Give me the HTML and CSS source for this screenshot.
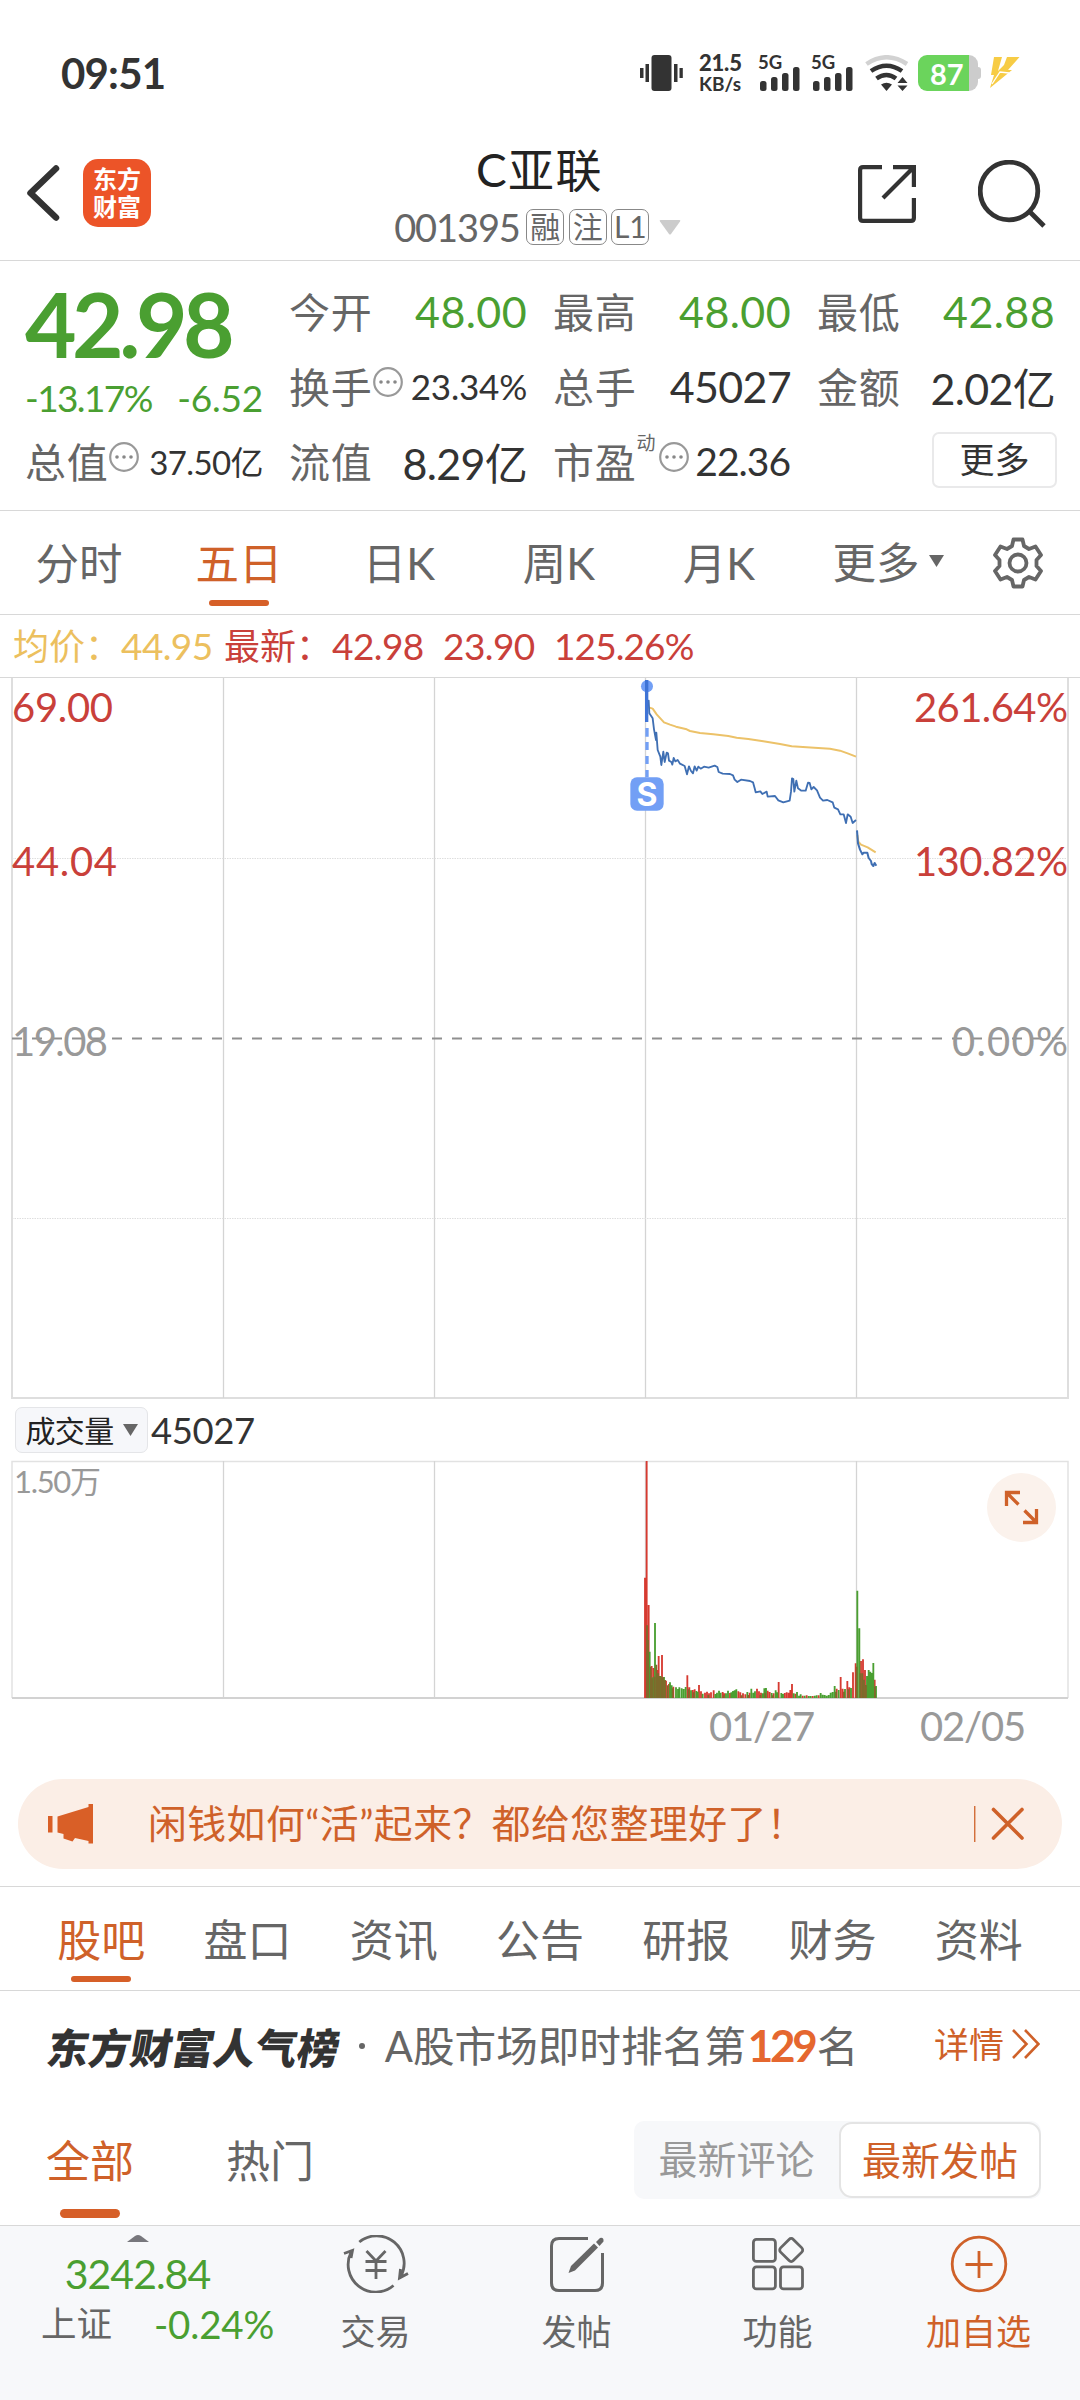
FILE: index.html
```html
<!DOCTYPE html>
<html lang="zh-CN">
<head>
<meta charset="utf-8">
<title>C亚联 001395</title>
<link rel="stylesheet" href="styles.css">
</head>
<body>
<svg width="0" height="0" class="defs">
  <symbol id="info" viewBox="0 0 30 30">
    <circle cx="15" cy="15" r="13.8" fill="none" stroke="#999" stroke-width="2.2"/>
    <circle cx="8" cy="15" r="1.8" fill="#888"/><circle cx="15" cy="15" r="1.8" fill="#888"/><circle cx="22" cy="15" r="1.8" fill="#888"/>
  </symbol>
  <symbol id="bars" viewBox="0 0 40 24">
    <rect x="0" y="14" width="6.5" height="10" rx="2.5"/><rect x="11" y="10" width="6.5" height="14" rx="2.5"/>
    <rect x="22" y="6" width="6.5" height="18" rx="2.5"/><rect x="33" y="0" width="6.5" height="24" rx="2.5"/>
  </symbol>
</svg>

<header class="status">
  <span class="clock">09:51</span>
  <div class="status-icons">
    <svg class="vibrate" width="43" height="36" viewBox="0 0 43 36" fill="#333"><rect x="11.500" y="0" width="20" height="36" rx="3"/><rect x="5.500" y="9" width="3.500" height="18"/><rect x="0" y="13" width="3.500" height="10"/><rect x="34" y="9" width="3.500" height="18"/><rect x="39.500" y="13" width="3.300" height="10"/></svg>
    <div class="speed"><b>21.5</b><span>KB/s</span></div>
    <div class="signal"><b>5G</b><svg width="40" height="24" fill="#333"><use href="#bars"/></svg></div>
    <div class="signal"><b>5G</b><svg width="40" height="24" fill="#333"><use href="#bars"/></svg></div>
    <svg class="wifi" width="44" height="36" viewBox="0 0 44 36" fill="none">
      <path d="M1.500 9Q21.500-4.500 42 9" stroke="#d2d2d2" stroke-width="4.500"/>
      <path d="M6 16Q21.500 5.500 37 16" stroke="#333" stroke-width="4.500"/>
      <path d="M11.500 23.500Q21.500 16.500 31 23.500" stroke="#333" stroke-width="4.500"/>
      <path d="M16 29.500Q21.500 26 27 29.500L21.500 36Z" fill="#333"/>
      <path d="M32.500 28L37.500 22L42.500 28ZM32.500 30.500H42.500L37.500 36Z" fill="#333"/>
    </svg>
    <div class="battery"><span>87</span></div>
    <svg class="bolt" width="30" height="31" viewBox="0 0 30 31" fill="#f7cc45"><path d="M4 0H12L8 14L14 8L17 0H29.500L18 13H22L0 31L4 18H1Z"/><path d="M2 27L10 15L19 16" fill="none" stroke="#fff" stroke-width="1.300"/></svg>
  </div>
</header>

<nav class="titlebar">
  <div class="left">
    <svg width="34" height="58" viewBox="0 0 34 58" fill="none" stroke="#333" stroke-width="6.500" stroke-linecap="round" stroke-linejoin="round"><path d="M30 4.500L4.500 29L30 53.500"/></svg>
    <div class="logo"><span>东方</span><span>财富</span></div>
  </div>
  <div class="name">
    <h1>C亚联</h1>
    <div class="code"><span class="digits">001395</span><i>融</i><i>注</i><i>L1</i><svg width="22" height="15"><path d="M1.500 0H20.500Q22 0 21 1.500L12 14Q11 15 10 14L1 1.500Q0 0 1.500 0Z" fill="#ccc"/></svg></div>
  </div>
  <div class="right">
    <svg width="58" height="58" viewBox="0 0 58 58" fill="none" stroke="#333" stroke-width="4.200"><path d="M24 2.100H5Q2.100 2.100 2.100 5V53Q2.100 55.900 5 55.900H53Q55.900 55.900 55.900 53V33M35 2.100H55.900V22M54.500 3.500L25 33"/></svg>
    <svg width="68" height="68" viewBox="0 0 68 68" fill="none" stroke="#333" stroke-width="4.800"><ellipse cx="31" cy="31" rx="28.800" ry="28.800"/><path d="M51 51L66 66"/></svg>
  </div>
</nav>

<section class="quote">
  <div class="price"><strong>42.98</strong><div><span class="pct">-13.17%</span><span>-6.52</span></div></div>
  <div class="cell"><label>今开</label><b class="up">48.00</b></div>
  <div class="cell"><label>最高</label><b class="up">48.00</b></div>
  <div class="cell"><label>最低</label><b class="up">42.88</b></div>
  <div class="cell"><label>换手</label><svg class="info"><use href="#info"/></svg><b class="s34">23.34%</b></div>
  <div class="cell"><label>总手</label><b>45027</b></div>
  <div class="cell"><label>金额</label><b>2.02亿</b></div>
  <div class="cell"><label>总值</label><svg class="info"><use href="#info"/></svg><b class="s33">37.50亿</b></div>
  <div class="cell"><label>流值</label><b>8.29亿</b></div>
  <div class="cell"><label>市盈</label><sup>动</sup><svg class="info"><use href="#info"/></svg><b class="s38">22.36</b></div>
  <div class="cell"><button>更多</button></div>
</section>

<nav class="periods">
  <span>分时</span><span class="on">五日</span><span>日K</span><span>周K</span><span>月K</span>
  <span class="more">更多<svg width="15" height="12"><path d="M0 0H15L7.500 12Z" fill="#666"/></svg></span>
  <svg class="gear" width="52" height="52" viewBox="0 0 52 52" fill="none" stroke="#666" stroke-width="3.800" stroke-linejoin="round"><path d="M21.500 2.500H30.500L32 9L37 12L43.500 9.500L49 18L44.500 23V29L49 34L43.500 42.500L37 40L32 43L30.500 49.500H21.500L20 43L15 40L8.500 42.500L3 34L7.500 29V23L3 18L8.500 9.500L15 12L20 9Z"/><circle cx="26" cy="26" r="8.500"/></svg>
</nav>

<div class="legend"><span class="avg">均价：<em>44.95</em></span><span class="w1">最新：<em>42.98</em></span><em>23.90</em><em class="w3">125.26%</em></div>

<svg class="chart" width="1080" height="722" viewBox="0 678 1080 722">
  <g fill="none" stroke="#dedede" stroke-width="2">
    <path d="M12 678V1398H1068V678"/>
    <path d="M223.500 678V1398M434.500 678V1398M645.500 678V1398M856.500 678V1398" stroke-width="1.300" stroke="#d4d4d4"/>
    <path d="M12 858.500H1068M12 1218.500H1068" stroke-width="1" stroke-dasharray="1.500 1"/>
    <path d="M12 1038.500H1068" stroke="#8f8f8f" stroke-width="2" stroke-dasharray="10 10"/>
  </g>
  <g transform="translate(600 660) scale(.33333)" fill="none" stroke-linejoin="round">
    <path d="M146 142L158 146L170 163L192 187L210 194L228 200L260 208L270 213L300 219L340 223L385 228L410 233L445 237L490 244L540 252L575 259L620 262L690 266L720 272L745 281L768 290M772 525L775 545L783 554L803 562L827 577" stroke="#ecc269" stroke-width="6"/>
    <path d="M139 60V140L146 122L148 160L158 175L162 208L168 240L169 218L173 270L181 290L184 315L190 275L194 306L200 278L204 280L207 302L214 306L217 314L221 294L226 304L233 300L240 311L254 318L261 343L267 319L273 333L279 340L284 319L290 332L295 320L302 326L312 320L326 323L344 317L352 321L356 336L368 341L390 342L399 346L404 359L412 366L423 359L450 363L459 367L464 385L467 397L481 394L487 402L500 395L503 410L525 408L535 421L550 427L569 422L573 395L576 355L580 357L583 395L589 362L594 385L604 392L617 392L624 368L629 369L634 388L641 381L651 391L660 413L669 422L682 420L698 427L703 443L714 448L721 463L731 463L738 489L743 463L752 470L758 489L768 480" stroke="#3f6fb3" stroke-width="5.500"/>
    <path d="M771 511L774 550L780 569L787 583L791 578L802 578L806 594L813 603L815 612L820 618L824 609L829 617" stroke="#3f6fb3" stroke-width="6"/>
    <circle cx="141" cy="79" r="18" fill="#729ff5"/>
    <path d="M140 60V186" stroke="#3f74d6" stroke-width="10"/>
    <path d="M141 204V230M141 246V270M141 288V312M141 330V352" stroke="#729ff5" stroke-width="10"/>
    <rect x="91" y="352" width="100" height="100" rx="20" fill="#729ff5"/>
    <text x="141" y="438" text-anchor="middle" class="mark">S</text>
  </g>
  <g class="axis">
    <text x="12" y="722" textLength="101">69.00</text>
    <text x="12" y="875.500" textLength="105">44.04</text>
    <text x="1068" y="722" text-anchor="end" textLength="154">261.64%</text>
    <text x="1068" y="875.500" text-anchor="end" textLength="154">130.82%</text>
    <text x="12" y="1055.500" textLength="96" class="mid">19.08</text>
    <text x="1068" y="1055.500" text-anchor="end" textLength="116" class="mid">0.00%</text>
  </g>
</svg>

<div class="volhead"><button>成交量<svg width="15" height="12"><path d="M0 0H15L7.500 12Z" fill="#666"/></svg></button><span>45027</span></div>

<svg class="chart" width="1080" height="240" viewBox="0 1460 1080 240">
  <g fill="none" stroke="#e2e2e2">
    <path d="M12 1698V1461.500H1068V1698" stroke-width="1.500"/>
    <path d="M223.500 1461V1698M434.500 1461V1698M645.500 1461V1698M856.500 1461V1698" stroke-width="1.300" stroke="#d4d4d4"/>
    <path d="M12 1698H1068" stroke="#d2d2d2" stroke-width="2"/>
  </g>
  <g transform="translate(620 1440) scale(.33333)" fill="none" stroke-width="5.500">
    <path stroke="#d63a30" d="M75 774V413M80 774V63M86 774V495M95 774V678M101 774V684M111 774V690M116 774V648M126 774V645M138 774V722M147 774V732M160 774V740M202 774V706M208 774V742M218 774V750M224 774V748M237 774V735M243 774V754M255 774V758M261 774V755M267 774V760M273 774V757M281 774V751M308 774V756M313 774V760M330 774V759M355 774V754M361 774V757M369 774V760M376 774V763M389 774V758M411 774V746M417 774V754M423 774V758M443 774V752M449 774V756M461 774V760M476 774V726M494 774V759M500 774V757M506 774V758M511 774V750M516 774V732M526 774V761M548 774V767M560 774V766M578 774V768M596 774V766M650 774V746M662 774V711M668 774V746M682 774V723M688 774V742M699 774V697M707 774V670M723 774V663M729 774V658M735 774V690M764 774V719"/>
    <path stroke="#4a9f31" d="M89 774V635M105 774V549M99 774V712M122 774V708M132 774V711M150 774V727M155 774V736M168 774V742M174 774V747M178 774V742M185 774V745M191 774V747M197 774V741M213 774V751M229 774V753M233 774V755M248 774V761M286 774V762M291 774V758M297 774V752M302 774V758M318 774V760M324 774V752M334 774V757M339 774V753M344 774V751M349 774V748M382 774V756M394 774V746M400 774V758M405 774V754M428 774V760M433 774V745M438 774V744M455 774V759M467 774V751M472 774V757M484 774V759M489 774V762M521 774V760M531 774V756M537 774V767M542 774V763M554 774V767M566 774V768M572 774V768M584 774V767M590 774V766M602 774V759M608 774V764M614 774V765M620 774V767M626 774V765M632 774V758M638 774V756M644 774V738M656 774V750M675 774V747M693 774V744M712 774V452M718 774V565M741 774V708M746 774V690M751 774V695M755 774V699M760 774V669M768 774V738"/>
    <path stroke="#7d6a2b" d="M81 774V556M84 774V600M92 774V680M96 774V715M103 774V710M109 774V674M114 774V700M119 774V708M125 774V712M129 774V712M135 774V720M143 774V736M158 774V745M206 774V748M221 774V757M265 774V765M311 774V766M365 774V766M385 774V765M421 774V765M436 774V758M458 774V766M648 774V755M672 774V755M685 774V748M710 774V680M721 774V700M727 774V700M732 774V719M738 774V735M765 774V740"/>
  </g>
  <text x="14" y="1493" class="voltop" textLength="87">1.50万</text>
  <circle cx="1021.500" cy="1507.500" r="34.500" fill="#fbf2ec"/>
  <path d="M1006.500 1506V1492.500H1020M1007 1493L1018.500 1504.500M1023 1522.500H1036.500V1509M1036 1522L1024.500 1510.500" fill="none" stroke="#cf6129" stroke-width="3.300"/>
</svg>
<div class="dates"><span>01/27</span><span>02/05</span></div>

<aside class="banner">
  <svg width="45" height="40" viewBox="0 0 45 40" fill="#d95f27"><rect x="0" y="12" width="4.500" height="16.500"/><path d="M9.500 12.500L40.500 3V0H45V39.500H40.500V37L27 34L24.500 37.500L15.500 34.500V30L9.500 28.500Z"/></svg>
  <p>闲钱如何“活”起来？都给您整理好了！</p>
  <svg class="close" width="50" height="36" viewBox="0 0 50 36" fill="none" stroke="#cf6129"><path d="M.750 0V36" stroke-width="1.300"/><path d="M19.500 3.500L48 32M48 3.500L19.500 32" stroke-width="3.600" stroke-linecap="round"/></svg>
</aside>

<nav class="sections"><span class="on">股吧</span><span>盘口</span><span>资讯</span><span>公告</span><span>研报</span><span>财务</span><span>资料</span></nav>

<div class="rank">
  <strong>东方财富人气榜</strong><u></u><p>A股市场即时排名第<b>129</b>名</p>
  <a>详情<svg width="28" height="30" viewBox="0 0 28 30" fill="none" stroke="#cf6129" stroke-width="2.600"><path d="M1 1L14.500 15L1 29M13 1L26.500 15L13 29"/></svg></a>
</div>

<div class="filter">
  <span class="on">全部</span><span>热门</span>
  <div class="seg"><span>最新评论</span><span class="sel">最新发帖</span></div>
</div>

<footer>
  <div class="index">
    <svg width="22" height="7"><path d="M0 7L8 1Q11-1 14 1L22 7Z" fill="#77777c"/></svg>
    <b>3242.84</b>
    <div><span>上证</span><em>-0.24%</em></div>
  </div>
  <div class="act">
    <svg width="66" height="58" viewBox="0 0 66 58" fill="none" stroke="#666" stroke-width="2.800"><path d="M16.300 7A27.500 27.500 0 0 1 57.800 41.500M50.500 50.500A27.500 27.500 0 0 1 8.200 17M1 18.500L9.500 15.500L8 23M57.500 34L56.500 43L65 38.500M23.500 16L33 26L42.500 16M33 26V44M22.500 26.500H43.500M22.500 35.500H43.500"/></svg>
    <span>交易</span>
  </div>
  <div class="act">
    <svg width="54" height="58" viewBox="0 0 54 58" fill="none" stroke="#666" stroke-width="3"><path d="M38 3.500H9Q1.500 3.500 1.500 11V48Q1.500 55.500 9 55.500H45Q52.500 55.500 52.500 48V18"/><path d="M18.500 38L21 31L44 8.500L48 12.500L25 35.500Z" fill="#666" stroke="none"/><path d="M46 7L50 3Q54 2 53.500 6.500L49.500 11Z" fill="#666" stroke="none"/></svg>
    <span>发帖</span>
  </div>
  <div class="act">
    <svg width="54" height="58" viewBox="0 0 54 58" fill="none" stroke="#666" stroke-width="2.800"><rect x="2.400" y="4.400" width="22" height="22" rx="3"/><rect x="2.400" y="31.900" width="22" height="22" rx="3"/><rect x="29.500" y="31.900" width="22" height="22" rx="3"/><rect x="31.200" y="6" width="18" height="18" rx="3" transform="rotate(45 40.200 15)"/></svg>
    <span>功能</span>
  </div>
  <div class="act hot">
    <svg width="58" height="58" viewBox="0 0 58 58" fill="none" stroke="#cf6129" stroke-width="2.800"><circle cx="29" cy="29" r="26.800"/><path d="M15.500 29.500H42.500M29 16V43"/></svg>
    <span>加自选</span>
  </div>
</footer>
</body>
</html>
```
FILE: styles.css
```css
* { box-sizing: border-box; margin: 0; padding: 0; }
body {
  width: 1080px; height: 2400px; overflow: hidden; background: #fff; color: #333;
  font-family: Lato, "Noto Sans CJK SC", sans-serif; white-space: nowrap;
}
svg { display: block; flex: none; }
.defs { position: absolute; }
em, i { font-style: normal; }
button { font-family: inherit; border: 0; }

.status { height: 145px; padding: 0 60px 0 61px; display: flex; justify-content: space-between; align-items: center; }
.clock { font-size: 42px; font-weight: 700; letter-spacing: -.8px; line-height: 50px; }
.status-icons { display: flex; align-items: center; height: 36px; }
.speed { margin-left: 16px; width: 44px; height: 38px; display: flex; flex-direction: column; justify-content: space-between; font-weight: 700; }
.speed b { font-size: 22px; line-height: 18px; letter-spacing: -.2px; }
.speed span { font-size: 19px; line-height: 16px; }
.signal { width: 53px; height: 36px; display: flex; flex-direction: column; justify-content: space-between; margin-left: 15px; }
.signal + .signal { margin-left: 0; }
.signal b { font-size: 18.500px; line-height: 14px; height: 12px; }
.signal svg { margin: 0 0 0 2px; }
.wifi { margin-left: 1px; }
.battery {
  position: relative; margin-left: 9px; width: 60px; height: 36px; border-radius: 9px; color: #fff;
  background: linear-gradient(90deg, #6bd45c 51px, #ccc 51px); font: 700 29px/37px Lato, sans-serif; padding-left: 12px;
}
.battery::after { content: ""; position: absolute; left: 59px; top: 12px; width: 4px; height: 12px; border-radius: 0 3px 3px 0; background: #ccc; }
.bolt { margin-left: 12px; }

.titlebar { height: 116px; border-bottom: 1px solid #d8d8d8; display: grid; grid-template-columns: 1fr auto 1fr; padding: 0 33px 0 26px; }
.titlebar .left { display: flex; align-items: center; height: 96px; gap: 23px; }
.logo { width: 68px; height: 68px; border-radius: 15px; background: #ec5428; color: #fff; display: flex; flex-direction: column; align-items: center; justify-content: center; font-size: 24px; font-weight: 700; line-height: 28px; padding-bottom: 1px; }
.name { display: flex; flex-direction: column; align-items: center; padding-left: 2px; }
.name h1 { font-size: 46px; font-weight: 400; line-height: 49px; color: #222; letter-spacing: 1.500px; padding-left: 4px; }
.code { height: 36px; margin-top: 15px; display: flex; align-items: center; gap: 4.500px; color: #666; }
.code .digits { font-size: 38px; letter-spacing: -1.100px; margin-right: 2px; }
.code i { width: 38px; height: 36px; border: 1.500px solid #888; border-radius: 7px; font-size: 30px; line-height: 32px; text-align: center; }
.code svg { margin-left: 5px; }
.titlebar .right { display: flex; align-items: center; justify-content: flex-end; height: 97px; gap: 62px; padding-right: 1px; }

.quote { height: 250px; border-bottom: 1px solid #d8d8d8; padding: 12px 25px 0; display: grid; grid-template-columns: repeat(4, 236px); grid-template-rows: repeat(3, 74.700px); column-gap: 28px; }
.price { grid-row: span 2; color: #4a9f31; padding-top: 2px; }
.price strong { display: block; font-size: 89px; line-height: 98px; letter-spacing: -4.500px; }
.price div { display: flex; justify-content: space-between; font-size: 37px; line-height: 48px; letter-spacing: -.2px; margin: 1px -2px 0 0; }
.price .pct { letter-spacing: -1.600px; }
.cell { display: flex; align-items: center; }
.cell label { font-size: 41px; letter-spacing: .8px; color: #666; }
.cell b { margin: 2px -2px 0 auto; font-weight: 400; font-size: 43px; letter-spacing: -.7px; }
.cell .up { color: #4a9f31; letter-spacing: .4px; }
.cell .s34 { font-size: 35px; letter-spacing: -.2px; }
.cell .s33 { font-size: 33px; letter-spacing: -.6px; }
.cell .s38 { font-size: 39px; letter-spacing: -1px; margin-right: -1px; }
.cell .info { width: 30px; height: 30px; margin-bottom: 6px; }
.cell sup { font-size: 19px; line-height: 20px; color: #666; margin: 0 3px 34px 0; }
.cell button { margin: 1px -4px 0 auto; width: 125px; height: 56px; background: #fff; border: 2px solid #e9e9ea; border-radius: 7px; color: #333; font-size: 35px; line-height: 50px; padding-bottom: 2px; }

.periods { height: 104px; border-bottom: 1px solid #d8d8d8; display: grid; grid-template-columns: repeat(5, 160px) 178px 80px; color: #666; font-size: 43.500px; line-height: 105px; text-align: center; }
.periods > span { padding-right: 2px; height: 103px; }
.periods .on, .sections .on, .filter .on { color: #cf6129; position: relative; }
.on::after { content: ""; position: absolute; left: 50%; margin-left: -31px; width: 60px; height: 6px; border-radius: 3px; background: #d65f28; }
.periods .on::after { bottom: 8px; }
.periods .more { display: flex; align-items: center; justify-content: center; gap: 9px; }
.periods .more svg { margin-bottom: 3px; }
.gear { align-self: center; justify-self: center; }

.legend { height: 63px; border-bottom: 1px solid #d8d8d8; padding-left: 13px; display: flex; color: #c9403a; font-size: 36px; line-height: 62px; }
.legend em { font-size: 37px; letter-spacing: -.6px; width: 111px; }
.legend .w3 { letter-spacing: -.9px; }
.legend span { display: flex; }
.legend .avg { color: #ecc05e; }
.legend .avg em { width: 103px; }
.chart .mark { font: 700 96px Inter, sans-serif; fill: #fff; }
.axis { font-size: 40px; fill: #c9403a; }
.axis .mid { fill: #999; }
.voltop { font-size: 31px; fill: #999; }

.volhead { height: 60px; display: flex; align-items: center; padding-left: 15px; gap: 3px; font-size: 36.500px; letter-spacing: -.4px; }
.volhead button { width: 133px; height: 46px; border: 1px solid #e4e5e8; border-radius: 7px; background: #f6f7fa; color: #222; font-size: 30px; line-height: 43px; letter-spacing: -.6px; display: flex; align-items: center; justify-content: center; gap: 9px; }

.dates { height: 79px; padding-left: 656px; display: grid; grid-template-columns: 211px 211px; color: #999; font-size: 40px; line-height: 52px; letter-spacing: -1.200px; }
.dates span { text-align: center; }

.banner { height: 90px; margin: 0 18px; border-radius: 45px; background: #fbeee6; color: #cf6129; display: flex; align-items: center; padding: 0 38px 0 30px; }
.banner p { font-size: 38.800px; margin-left: 55px; line-height: 86px; height: 88px; letter-spacing: .5px; }
.banner .close { margin-left: auto; }

.sections { margin-top: 17px; height: 105px; border: 1px solid #d8d8d8; border-width: 1px 0; padding: 0 28px; display: grid; grid-template-columns: repeat(7, 1fr); color: #666; font-size: 44px; line-height: 107px; text-align: center; }
.sections .on::after { bottom: 5px; margin-left: -30px; }
.sections span { height: 100px; }

.rank { height: 112px; padding: 0 40px 2px 48px; display: flex; align-items: center; color: #666; }
.rank strong { font-size: 41.700px; font-weight: 900; color: #333; transform: skewX(-10deg); }
.rank u { width: 6px; height: 6px; border-radius: 3px; background: #666; margin: 0 20px 0 19px; }
.rank p { font-size: 41.600px; line-height: 60px; }
.rank p b { font-size: 44px; line-height: 40px; color: #e5672f; letter-spacing: -3.200px; margin: 0 2px 0 2px; }
.rank a { margin-left: auto; display: flex; align-items: center; gap: 8px; color: #cf6129; font-size: 35px; line-height: 50px; padding-bottom: 4px; }

.filter { height: 122px; padding: 0 39px 0 46px; display: flex; color: #666; font-size: 44px; line-height: 116px; }
.filter > span { margin-right: 92px; }
.filter .on::after { bottom: 7px; height: 9px; border-radius: 5px; margin-left: -30px; }
.seg { margin: 18px 0 0 auto; width: 407px; height: 78px; border-radius: 10px; background: #f7f8fa; display: flex; color: #999; font-size: 39px; line-height: 76px; }
.seg span { width: 205px; text-align: center; }
.seg .sel { width: 202px; height: 76px; margin-top: 1px; border: 2px solid #e4e4e4; border-radius: 13px; background: #fff; color: #cf6129; line-height: 72px; }

footer { height: 176px; border-top: 1px solid #d8d8d8; background: #f7f8fa; display: grid; grid-template-columns: 275px repeat(4, 201px); color: #666; }
.index { display: flex; flex-direction: column; align-items: center; padding-top: 9px; }
.index b { font-weight: 400; font-size: 41px; line-height: 48px; letter-spacing: -1px; color: #4a9f31; margin-top: 8px; }
.index div { display: flex; align-self: stretch; padding-left: 41px; font-size: 35.500px; line-height: 48px; margin-top: 2px; }
.index em { color: #4a9f31; font-size: 38.500px; letter-spacing: -.2px; margin-left: 42px; }
.act { display: flex; flex-direction: column; align-items: center; padding-top: 9px; font-size: 35px; line-height: 48px; gap: 14px; }
.hot { color: #cf6129; }
```
